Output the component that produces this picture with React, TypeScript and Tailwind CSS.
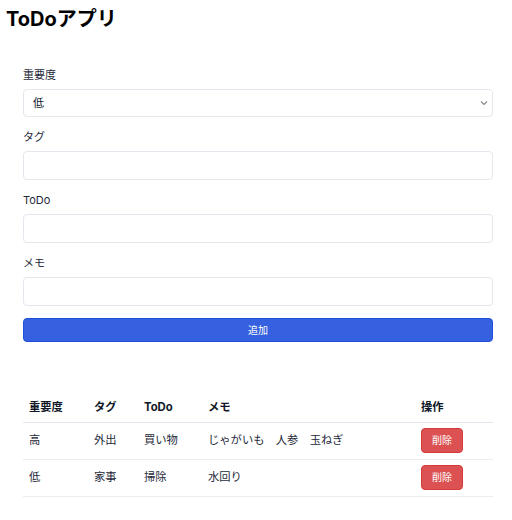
import React, { useState } from 'react';

type Todo = {
  id: number;
  priority: string;
  tag: string;
  title: string;
  memo: string;
};

const initialTodos: Todo[] = [
  { id: 1, priority: '高', tag: '外出', title: '買い物', memo: 'じゃがいも　人参　玉ねぎ' },
  { id: 2, priority: '低', tag: '家事', title: '掃除', memo: '水回り' },
];

const font = { fontFamily: 'Inter, "Noto Sans CJK JP", sans-serif' };

const Field: React.FC<{ label: string; children: React.ReactNode }> = ({ label, children }) => (
  <div className="mb-[13px]">
    <label className="block text-[11px] leading-[14px] text-gray-800 mb-[7px]">{label}</label>
    {children}
  </div>
);

export default function App() {
  const [todos, setTodos] = useState<Todo[]>(initialTodos);
  const [priority, setPriority] = useState('低');
  const [tag, setTag] = useState('');
  const [title, setTitle] = useState('');
  const [memo, setMemo] = useState('');

  const addTodo = () => {
    if (!title) return;
    setTodos([...todos, { id: Date.now(), priority, tag, title, memo }]);
    setTag('');
    setTitle('');
    setMemo('');
  };

  const inputClass =
    'block w-full h-[29px] px-[10px] text-[11px] text-gray-900 bg-white border border-[#e6e6ee] rounded-[4px] outline-none';

  return (
    <div className="min-h-[520px] bg-white text-gray-900" style={font}>
      <h1 className="pl-[6px] pt-[6px] text-[20px] leading-[26px] font-bold text-black">ToDoアプリ</h1>

      <div className="ml-[23px] w-[470px] mt-[36px]">
        <Field label="重要度">
          <div className="relative">
            <select
              value={priority}
              onChange={(e) => setPriority(e.target.value)}
              className="block w-full h-[28px] pl-[9px] text-[11px] text-gray-900 bg-white border border-[#e6e6ee] rounded-[4px] appearance-none outline-none"
            >
              <option value="低">低</option>
              <option value="中">中</option>
              <option value="高">高</option>
            </select>
            <svg
              className="absolute right-[5px] top-[11px] pointer-events-none"
              width="8"
              height="6"
              viewBox="0 0 8 6"
            >
              <path d="M1 1.5 L4 4.5 L7 1.5" fill="none" stroke="#888" strokeWidth="1.2" />
            </svg>
          </div>
        </Field>
        <Field label="タグ">
          <input className={inputClass} value={tag} onChange={(e) => setTag(e.target.value)} />
        </Field>
        <Field label="ToDo">
          <input className={inputClass} value={title} onChange={(e) => setTitle(e.target.value)} />
        </Field>
        <div className="mb-[12px]">
          <label className="block text-[11px] leading-[14px] text-gray-800 mb-[7px]">メモ</label>
          <input className={inputClass} value={memo} onChange={(e) => setMemo(e.target.value)} />
        </div>
        <button
          onClick={addTodo}
          className="block w-full h-[24px] text-[10px] text-white bg-[#3561e0] border border-[#1e50dc] rounded-[4px]"
        >
          追加
        </button>

        <table className="w-full mt-[52px] text-[11.3px] border-collapse">
          <thead>
            <tr className="border-b border-[#e6e6ee] h-[28px]">
              <th className="w-[65px] pl-[6px] text-left font-bold">重要度</th>
              <th className="w-[50px] pl-[6px] text-left font-bold">タグ</th>
              <th className="w-[64px] pl-[6px] text-left font-bold">ToDo</th>
              <th className="pl-[6px] text-left font-bold">メモ</th>
              <th className="w-[78px] pl-[6px] text-left font-bold">操作</th>
            </tr>
          </thead>
          <tbody>
            {todos.map((todo) => (
              <tr key={todo.id} className="border-b border-[#ececf0] h-[37px] text-gray-800">
                <td className="pl-[6px]">{todo.priority}</td>
                <td className="pl-[6px]">{todo.tag}</td>
                <td className="pl-[6px]">{todo.title}</td>
                <td className="pl-[6px] whitespace-pre">{todo.memo}</td>
                <td className="pl-[6px]">
                  <button
                    onClick={() => setTodos(todos.filter((t) => t.id !== todo.id))}
                    className="w-[42px] h-[25px] text-[10px] text-white bg-[#dc5252] border border-[#d63b3b] rounded-[4px]"
                  >
                    削除
                  </button>
                </td>
              </tr>
            ))}
          </tbody>
        </table>
      </div>
    </div>
  );
}
